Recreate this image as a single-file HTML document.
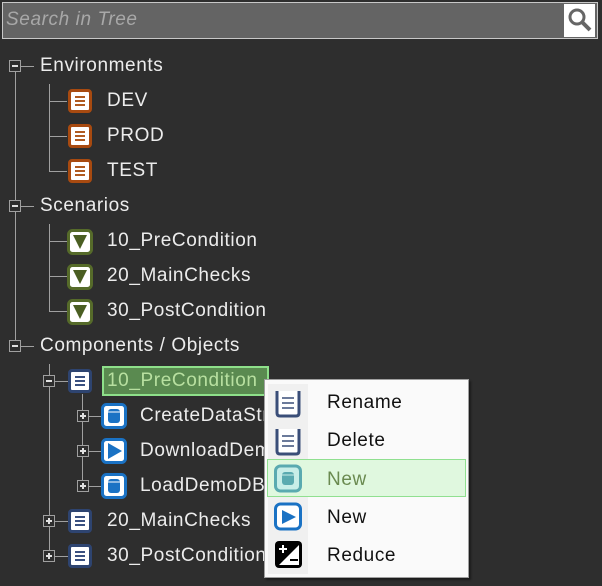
<!DOCTYPE html>
<html><head><style>
body{margin:0;width:602px;height:586px;background:#2e2e2e;position:relative;overflow:hidden;font-family:"Liberation Sans",sans-serif;}
.a{position:absolute}
.t{position:absolute;color:#ececec;font-size:19px;letter-spacing:0.6px;line-height:20px;white-space:nowrap}
.v{position:absolute;width:1px;background:#a0a0a0}
.h{position:absolute;height:1px;background:#a0a0a0}
.bx{position:absolute;width:10px;height:10px;border:1px solid #a0a0a0;background:#2e2e2e}
.bx:before{content:"";position:absolute;left:2px;top:4px;width:6px;height:2px;background:#e0e0e0}
.bx.p:after{content:"";position:absolute;left:4px;top:2px;width:2px;height:6px;background:#e0e0e0}
.ic{position:absolute;width:18px;height:18px;border-radius:4px;background:#fff;border:3px solid}
.ln{position:absolute;left:4px;width:10px;height:2px}
.mi{position:absolute;left:62px;font-size:19px;letter-spacing:0.6px;color:#111}
</style></head><body>
<div class="a" style="left:2px;top:2px;width:594px;height:35px;background:#646464;border:1px solid #c8c8c8"></div>
<div class="t" style="left:6px;top:10px;color:#a8a8a8;font-style:italic">Search in Tree</div>
<div class="a" style="left:564px;top:4px;width:31px;height:33px;background:#fff"></div>
<svg class="a" style="left:566px;top:6px" width="28" height="28"><circle cx="11" cy="11" r="7" fill="none" stroke="#666" stroke-width="3"/><line x1="16" y1="16" x2="24" y2="24" stroke="#666" stroke-width="4"/></svg>

<div class="v" style="left:15px;top:71px;height:275px"></div>
<div class="v" style="left:49px;top:84px;height:88px"></div>
<div class="v" style="left:49px;top:224px;height:88px"></div>
<div class="v" style="left:49px;top:364px;height:193px"></div>
<div class="v" style="left:82px;top:394px;height:93px"></div>
<div class="h" style="left:20px;top:66px;width:14px"></div>
<div class="h" style="left:20px;top:206px;width:14px"></div>
<div class="h" style="left:20px;top:346px;width:14px"></div>
<div class="h" style="left:49px;top:101px;width:18px"></div>
<div class="h" style="left:49px;top:136px;width:18px"></div>
<div class="h" style="left:49px;top:171px;width:18px"></div>
<div class="h" style="left:49px;top:241px;width:18px"></div>
<div class="h" style="left:49px;top:276px;width:18px"></div>
<div class="h" style="left:49px;top:311px;width:18px"></div>
<div class="h" style="left:54px;top:381px;width:14px"></div>
<div class="h" style="left:54px;top:521px;width:14px"></div>
<div class="h" style="left:54px;top:556px;width:14px"></div>
<div class="h" style="left:88px;top:416px;width:13px"></div>
<div class="h" style="left:88px;top:451px;width:13px"></div>
<div class="h" style="left:88px;top:486px;width:13px"></div>

<div class="bx" style="left:9px;top:60px"></div>
<div class="bx" style="left:9px;top:200px"></div>
<div class="bx" style="left:9px;top:340px"></div>
<div class="bx" style="left:43px;top:375px"></div>
<div class="bx p" style="left:43px;top:515px"></div>
<div class="bx p" style="left:43px;top:550px"></div>
<div class="bx p" style="left:77px;top:410px"></div>
<div class="bx p" style="left:77px;top:445px"></div>
<div class="bx p" style="left:77px;top:480px"></div>

<div class="t" style="left:40px;top:56px">Environments</div>
<div class="t" style="left:40px;top:196px">Scenarios</div>
<div class="t" style="left:40px;top:336px">Components / Objects</div>

<div class="ic" style="left:68px;top:89px;border-color:#a84a10"><div class="ln" style="top:4px;background:#b05a20"></div><div class="ln" style="top:8px;background:#b05a20"></div><div class="ln" style="top:12px;background:#b05a20"></div></div>
<div class="ic" style="left:68px;top:124px;border-color:#a84a10"><div class="ln" style="top:4px;background:#b05a20"></div><div class="ln" style="top:8px;background:#b05a20"></div><div class="ln" style="top:12px;background:#b05a20"></div></div>
<div class="ic" style="left:68px;top:159px;border-color:#a84a10"><div class="ln" style="top:4px;background:#b05a20"></div><div class="ln" style="top:8px;background:#b05a20"></div><div class="ln" style="top:12px;background:#b05a20"></div></div>
<div class="t" style="left:107px;top:91px">DEV</div>
<div class="t" style="left:107px;top:126px">PROD</div>
<div class="t" style="left:107px;top:161px">TEST</div>

<svg class="a" style="left:67px;top:229px" width="26" height="26"><rect x="1.5" y="1.5" width="23" height="23" rx="4" fill="#fff" stroke="#566b2a" stroke-width="3"/><polygon points="6,6 20,6 13,20" fill="#4a5e22"/></svg>
<svg class="a" style="left:67px;top:264px" width="26" height="26"><rect x="1.5" y="1.5" width="23" height="23" rx="4" fill="#fff" stroke="#566b2a" stroke-width="3"/><polygon points="6,6 20,6 13,20" fill="#4a5e22"/></svg>
<svg class="a" style="left:67px;top:299px" width="26" height="26"><rect x="1.5" y="1.5" width="23" height="23" rx="4" fill="#fff" stroke="#566b2a" stroke-width="3"/><polygon points="6,6 20,6 13,20" fill="#4a5e22"/></svg>
<div class="t" style="left:107px;top:231px">10_PreCondition</div>
<div class="t" style="left:107px;top:266px">20_MainChecks</div>
<div class="t" style="left:107px;top:301px">30_PostCondition</div>

<div class="ic" style="left:68px;top:369px;border-color:#2e4470"><div class="ln" style="top:4px;background:#3a5080"></div><div class="ln" style="top:8px;background:#3a5080"></div><div class="ln" style="top:12px;background:#3a5080"></div></div>
<div class="ic" style="left:68px;top:509px;border-color:#2e4470"><div class="ln" style="top:4px;background:#3a5080"></div><div class="ln" style="top:8px;background:#3a5080"></div><div class="ln" style="top:12px;background:#3a5080"></div></div>
<div class="ic" style="left:68px;top:544px;border-color:#2e4470"><div class="ln" style="top:4px;background:#3a5080"></div><div class="ln" style="top:8px;background:#3a5080"></div><div class="ln" style="top:12px;background:#3a5080"></div></div>
<div class="a" style="left:102px;top:366px;width:163px;height:26px;background:#5a8a50;border:2px solid #8ee08a;overflow:hidden"><div class="t" style="left:3px;top:3px;color:#b8e0a0">10_PreCondition</div></div>
<div class="t" style="left:107px;top:511px">20_MainChecks</div>
<div class="t" style="left:107px;top:546px">30_PostCondition</div>

<svg class="a" style="left:101px;top:403px" width="26" height="26"><rect x="1.5" y="1.5" width="23" height="23" rx="4" fill="#fff" stroke="#1a72c4" stroke-width="3"/><rect x="7" y="6" width="12" height="14" rx="3" fill="#1a72c4"/><line x1="7" y1="9" x2="19" y2="9" stroke="#fff"/></svg>
<svg class="a" style="left:101px;top:438px" width="26" height="26"><rect x="1.5" y="1.5" width="23" height="23" rx="4" fill="#fff" stroke="#1a72c4" stroke-width="3"/><polygon points="7,5 21,13 7,21" fill="#1a72c4"/></svg>
<svg class="a" style="left:101px;top:473px" width="26" height="26"><rect x="1.5" y="1.5" width="23" height="23" rx="4" fill="#fff" stroke="#1a72c4" stroke-width="3"/><rect x="7" y="6" width="12" height="14" rx="3" fill="#1a72c4"/><line x1="7" y1="9" x2="19" y2="9" stroke="#fff"/></svg>
<div class="t" style="left:140px;top:406px">CreateDataStructure</div>
<div class="t" style="left:140px;top:441px">DownloadDemoData</div>
<div class="t" style="left:140px;top:476px">LoadDemoDB</div>

<div class="a" style="left:264px;top:379px;width:203px;height:197px;background:#fafafa;border:1px solid #a0a0a0;box-shadow:2px 2px 2px rgba(0,0,0,.4)">
<div class="a" style="left:3px;top:4px;width:40px;height:190px;background:#f0f0f0"></div>
<div class="a" style="left:2px;top:79px;width:197px;height:36px;background:#e0f8df;border:1px solid #90e090"></div>
<svg class="a" style="left:9px;top:9px" width="30" height="30"><path d="M3 2 V24 Q3 27 6 27 H22 Q25 27 25 24 V2" fill="#fff" stroke="#3a4e78" stroke-width="3"/><path d="M8 9H20M8 14H20M8 19H20" stroke="#3a4e78" stroke-width="1.5"/></svg>
<svg class="a" style="left:9px;top:47px" width="30" height="30"><path d="M3 2 V24 Q3 27 6 27 H22 Q25 27 25 24 V2" fill="#fff" stroke="#3a4e78" stroke-width="3"/><path d="M8 9H20M8 14H20M8 19H20" stroke="#3a4e78" stroke-width="1.5"/></svg>
<svg class="a" style="left:9px;top:84px" width="30" height="30"><rect x="1.5" y="2" width="25" height="25" rx="5" fill="#c8eee8" stroke="#5aaab0" stroke-width="3"/><rect x="8" y="8" width="12" height="13" rx="3" fill="#5aaab0"/><line x1="8" y1="11" x2="20" y2="11" stroke="#c8eee8"/></svg>
<svg class="a" style="left:9px;top:122px" width="30" height="30"><rect x="1.5" y="2" width="25" height="25" rx="5" fill="#fff" stroke="#1a72c4" stroke-width="3"/><polygon points="8,8 22,15 8,22" fill="#1a72c4"/></svg>
<svg class="a" style="left:9px;top:160px" width="30" height="30"><rect x="1" y="1" width="27" height="27" rx="4" fill="#000"/><polygon points="25,5 25,25 5,25" fill="#fff"/><path d="M5 9H13M9 5V13" stroke="#fff" stroke-width="2"/><path d="M16 20H24" stroke="#000" stroke-width="2"/></svg>
<div class="mi" style="top:12px">Rename</div>
<div class="mi" style="top:50px">Delete</div>
<div class="mi" style="top:89px;color:#6a8a50">New</div>
<div class="mi" style="top:127px">New</div>
<div class="mi" style="top:165px">Reduce</div>
</div>
</body></html>
